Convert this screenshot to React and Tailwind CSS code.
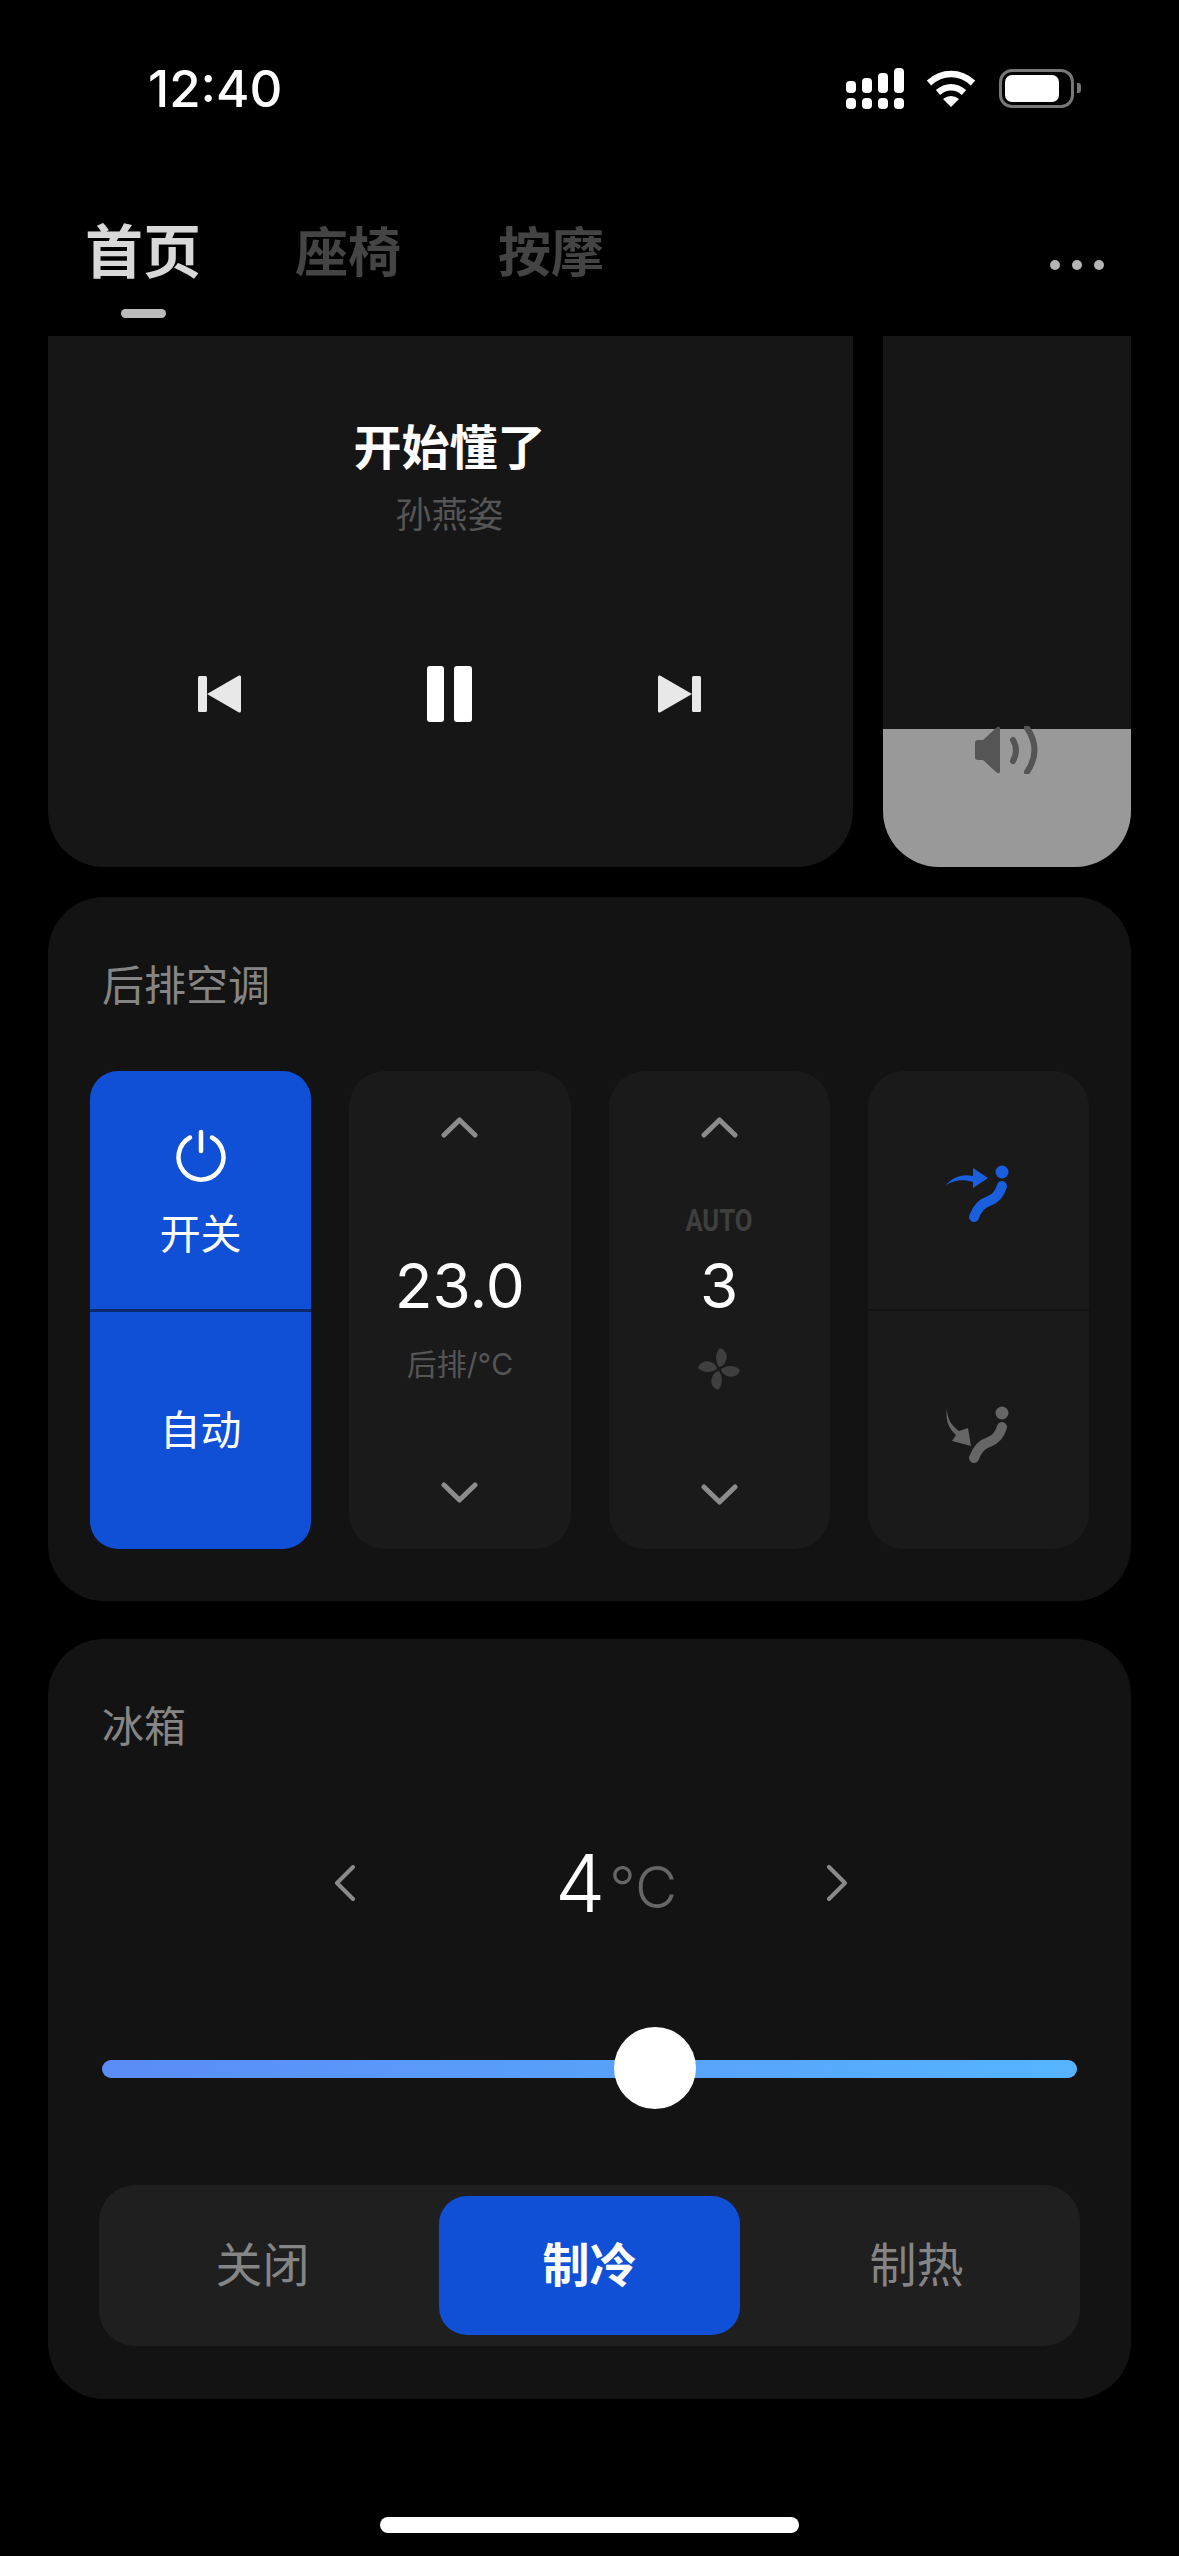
import { useState } from "react";

const FONT = { fontFamily: '"Inter", "Noto Sans CJK SC", sans-serif' };

function ChevronV({ down }) {
  return (
    <svg width="37" height="21" viewBox="0 0 37 21" fill="none" stroke="#8c8c8c" strokeWidth="5" strokeLinecap="round" strokeLinejoin="round">
      <path d={down ? "M3 3L18.5 18L34 3" : "M3 18L18.5 3L34 18"} />
    </svg>
  );
}

function ChevronH({ right }) {
  return (
    <svg width="22" height="36" viewBox="0 0 22 36" fill="none" stroke="#8a8a8a" strokeWidth="4" strokeLinecap="round" strokeLinejoin="round">
      <path d={right ? "M3 2L19 18L3 34" : "M19 2L3 18L19 34"} />
    </svg>
  );
}

function SeatIcon({ color, down }) {
  return (
    <svg width="68" height="60" viewBox="0 0 68 60" fill={color}>
      <circle cx="58" cy="8" r="6.5" />
      <path d="M58 22C55 32 50 35 45 37C38 39 33 45 30 53" fill="none" stroke={color} strokeWidth="10" strokeLinecap="round" />
      {down
        ? <path d="M3 4C3 14 8 21 15 26L24 23L27 41L8 36L12 30C5 24 1 15 3 4Z" />
        : <path d="M2 21C10 12 20 10 29 12V4L44 14L29 24V18C20 15 10 16 2 21Z" />}
    </svg>
  );
}

function FanIcon() {
  const blade = "M22 20C18 14 18 6 23 1C31 3 32 14 25 19Q23.5 20 22 20Z";
  return (
    <svg width="44" height="44" viewBox="0 0 44 44" fill="#3f3f40">
      {[0, 90, 180, 270].map(r => <path key={r} d={blade} transform={`rotate(${r} 22 22)`} />)}
    </svg>
  );
}

function StatusIcons() {
  return (
    <div className="flex items-center">
      <svg width="58" height="41" viewBox="0 0 58 41" fill="#fff">
        <rect x="0" y="13" width="10" height="12" rx="4" />
        <rect x="16" y="10" width="10" height="15" rx="4" />
        <rect x="32" y="5" width="10" height="20" rx="4" />
        <rect x="48" y="0" width="10" height="25" rx="4" />
        <rect x="0" y="30" width="10" height="11" rx="4" />
        <rect x="16" y="30" width="10" height="11" rx="4" />
        <rect x="32" y="30" width="10" height="11" rx="4" />
        <rect x="48" y="30" width="10" height="11" rx="4" />
      </svg>
      <svg className="ml-[22px]" width="50" height="37" viewBox="0 0 50 37" fill="none" stroke="#fff" strokeWidth="6.5">
        <path d="M3 13C16 1 34 1 47 13" />
        <path d="M12 22.5C20 15.5 30 15.5 38 22.5" />
        <path d="M17 29Q25 23 33 29L25 37Z" fill="#fff" stroke="none" />
      </svg>
      <div className="ml-[23px] w-[75px] h-[39px] rounded-[13px] border-[3px] border-[#777] flex items-center pl-[3px]">
        <div className="w-[54px] h-[27px] rounded-[7px] bg-white" />
      </div>
      <div className="ml-[3px] w-[4px] h-[10px] rounded-r-[3px] bg-[#777]" />
    </div>
  );
}

export default function App() {
  const [mode, setMode] = useState("制冷");

  return (
    <div className="w-[1179px] h-[2556px] bg-black overflow-hidden flex flex-col" style={FONT}>
      {/* status bar */}
      <div className="h-[176px] flex items-center justify-between pl-[148px] pr-[98px]">
        <span className="text-[51px] font-medium text-white leading-none">12:40</span>
        <StatusIcons />
      </div>

      {/* tabs */}
      <div className="h-[160px] flex items-start pl-[85px] pr-[75px] pt-[48px]">
        <div className="flex flex-col items-center">
          <span className="text-[58px] leading-[57px] font-bold text-[#d8d8d8]">首页</span>
          <div className="mt-[28px] w-[45px] h-[9px] rounded-full bg-[#bbbbbb]" />
        </div>
        <span className="ml-[94px] mt-[3px] text-[53px] leading-[52px] font-bold text-[#444444]">座椅</span>
        <span className="ml-[97px] mt-[3px] text-[53px] leading-[52px] font-bold text-[#444444]">按摩</span>
        <div className="ml-auto mt-[36px] flex gap-[12px]">
          <div className="w-[10px] h-[10px] rounded-full bg-[#b5b5b5]" />
          <div className="w-[10px] h-[10px] rounded-full bg-[#b5b5b5]" />
          <div className="w-[10px] h-[10px] rounded-full bg-[#b5b5b5]" />
        </div>
      </div>

      <div className="px-[48px] flex flex-col">
        {/* music + volume */}
        <div className="flex gap-[30px] h-[531px]">
          <div className="w-[805px] bg-[#161617] rounded-b-[56px] flex flex-col items-center pt-[87px] pr-[2px]">
            <div className="text-[48px] leading-[50px] font-semibold text-white">开始懂了</div>
            <div className="mt-[20px] text-[36px] leading-[44px] text-[#555555]">孙燕姿</div>
            <div className="mt-[129px] w-[503px] flex items-center justify-between">
              <svg width="43" height="38" viewBox="0 0 43 38" fill="#e8e8e8">
                <rect x="0" y="1" width="9" height="36" rx="1.5" />
                <path d="M9 19L41 0.5Q43 0 43 2V36Q43 38 41 37.5Z" />
              </svg>
              <svg width="45" height="56" viewBox="0 0 45 56" fill="#fff">
                <rect x="0" y="0" width="17" height="56" rx="3" />
                <rect x="27" y="0" width="18" height="56" rx="3" />
              </svg>
              <svg width="43" height="38" viewBox="0 0 43 38" fill="#e8e8e8">
                <rect x="34" y="1" width="9" height="36" rx="1.5" />
                <path d="M34 19L2 0.5Q0 0 0 2V36Q0 38 2 37.5Z" />
              </svg>
            </div>
          </div>
          <div className="relative flex-1 bg-[#161617] rounded-b-[56px] overflow-hidden flex flex-col justify-end">
            <div className="h-[138px] bg-[#999999]" />
            <svg className="absolute left-[92px] top-[390px]" width="64" height="48" viewBox="0 0 64 48" fill="#555555">
              <path d="M3 14Q0 14 0 17V31Q0 34 3 34H8L21 46Q25 49 25 45V3Q25 -1 21 2L8 14Z" />
              <path d="M38 14Q44 24 38 35" fill="none" stroke="#555555" strokeWidth="6" strokeLinecap="round" />
              <path d="M52 2Q67 24 52 46" fill="none" stroke="#555555" strokeWidth="6" strokeLinecap="round" />
            </svg>
          </div>
        </div>

        {/* rear AC */}
        <div className="mt-[30px] h-[704px] bg-[#131314] rounded-[56px] px-[42px] pt-[66px]">
          <div className="pl-[12px] text-[42px] leading-[46px] text-[#858585]">后排空调</div>
          <div className="mt-[62px] h-[478px] grid grid-cols-4 gap-[38px]">
            <div className="rounded-[28px] overflow-hidden flex flex-col bg-[#1050d6]">
              <div className="h-[238px] flex flex-col items-center pt-[58px] text-white">
                <svg width="54" height="54" viewBox="0 0 54 54" fill="none" stroke="#fff" strokeWidth="4.5" strokeLinecap="round">
                  <path d="M16 8.5A22.5 22.5 0 1 0 38 8.5" />
                  <path d="M27 3V22" />
                </svg>
                <span className="mt-[26px] text-[41px] leading-[50px]">开关</span>
              </div>
              <div className="h-[3px] bg-[#0b2a6b]" />
              <div className="flex-1 flex items-center justify-center text-[41px] text-white">自动</div>
            </div>

            <div className="rounded-[36px] bg-[#1a1a1b] flex flex-col items-center pt-[46px]">
              <ChevronV />
              <div className="mt-[113px] text-[62px] leading-[70px] text-white">23.0</div>
              <div className="mt-[23px] text-[30px] leading-[40px] text-[#555555]">后排/°C</div>
              <div className="mt-[98px]"><ChevronV down /></div>
            </div>

            <div className="rounded-[36px] bg-[#1a1a1b] flex flex-col items-center pt-[46px]">
              <ChevronV />
              <div className="mt-[66px] text-[32px] leading-[32px] font-bold text-[#3f3f3f] scale-x-[0.8]" style={{ fontFamily: "Roboto, sans-serif" }}>AUTO</div>
              <div className="mt-[15px] text-[62px] leading-[70px] text-white">3</div>
              <div className="mt-[26px]"><FanIcon /></div>
              <div className="mt-[93px]"><ChevronV down /></div>
            </div>

            <div className="rounded-[36px] overflow-hidden bg-[#1a1a1b] flex flex-col">
              <div className="h-[238px] flex items-start justify-center pt-[93px]"><SeatIcon color="#1a5fdd" /></div>
              <div className="h-[2px] bg-[#121213]" />
              <div className="flex-1 flex items-start justify-center pt-[94px]"><SeatIcon color="#666666" down /></div>
            </div>
          </div>
        </div>

        {/* fridge */}
        <div className="mt-[38px] h-[760px] bg-[#131314] rounded-[56px] pt-[65px]">
          <div className="pl-[54px] text-[42px] leading-[46px] text-[#858585]">冰箱</div>
          <div className="mt-[98px] pl-[286px] flex items-center h-[70px]">
            <ChevronH />
            <div className="ml-[199px] w-[271px] flex items-baseline">
              <span className="text-[80px] leading-[70px] font-light text-white translate-y-[4px]">4</span>
              <span className="ml-[4px] text-[58px] leading-[70px] font-light text-[#666666]">°C</span>
            </div>
            <ChevronH right />
          </div>
          <div className="relative mt-[142px] mx-[54px] h-[18px] rounded-full bg-gradient-to-r from-[#5a8cf5] to-[#55b4ff]">
            <div className="absolute left-[512px] top-[-33px] w-[82px] h-[82px] rounded-full bg-white" />
          </div>
          <div className="mt-[107px] mx-[51px] h-[161px] rounded-[36px] bg-[#1f1f20] grid grid-cols-3 py-[11px] text-[47px]">
            {["关闭", "制冷", "制热"].map(m => (
              <button key={m} onClick={() => setMode(m)}
                className={mode === m ? "mx-[13px] rounded-[28px] bg-[#1050d6] text-white font-semibold" : "text-[#858585]"}>
                {m}
              </button>
            ))}
          </div>
        </div>
      </div>

      {/* home indicator */}
      <div className="mt-[118px] mx-auto w-[419px] h-[16px] rounded-full bg-white" />
    </div>
  );
}
